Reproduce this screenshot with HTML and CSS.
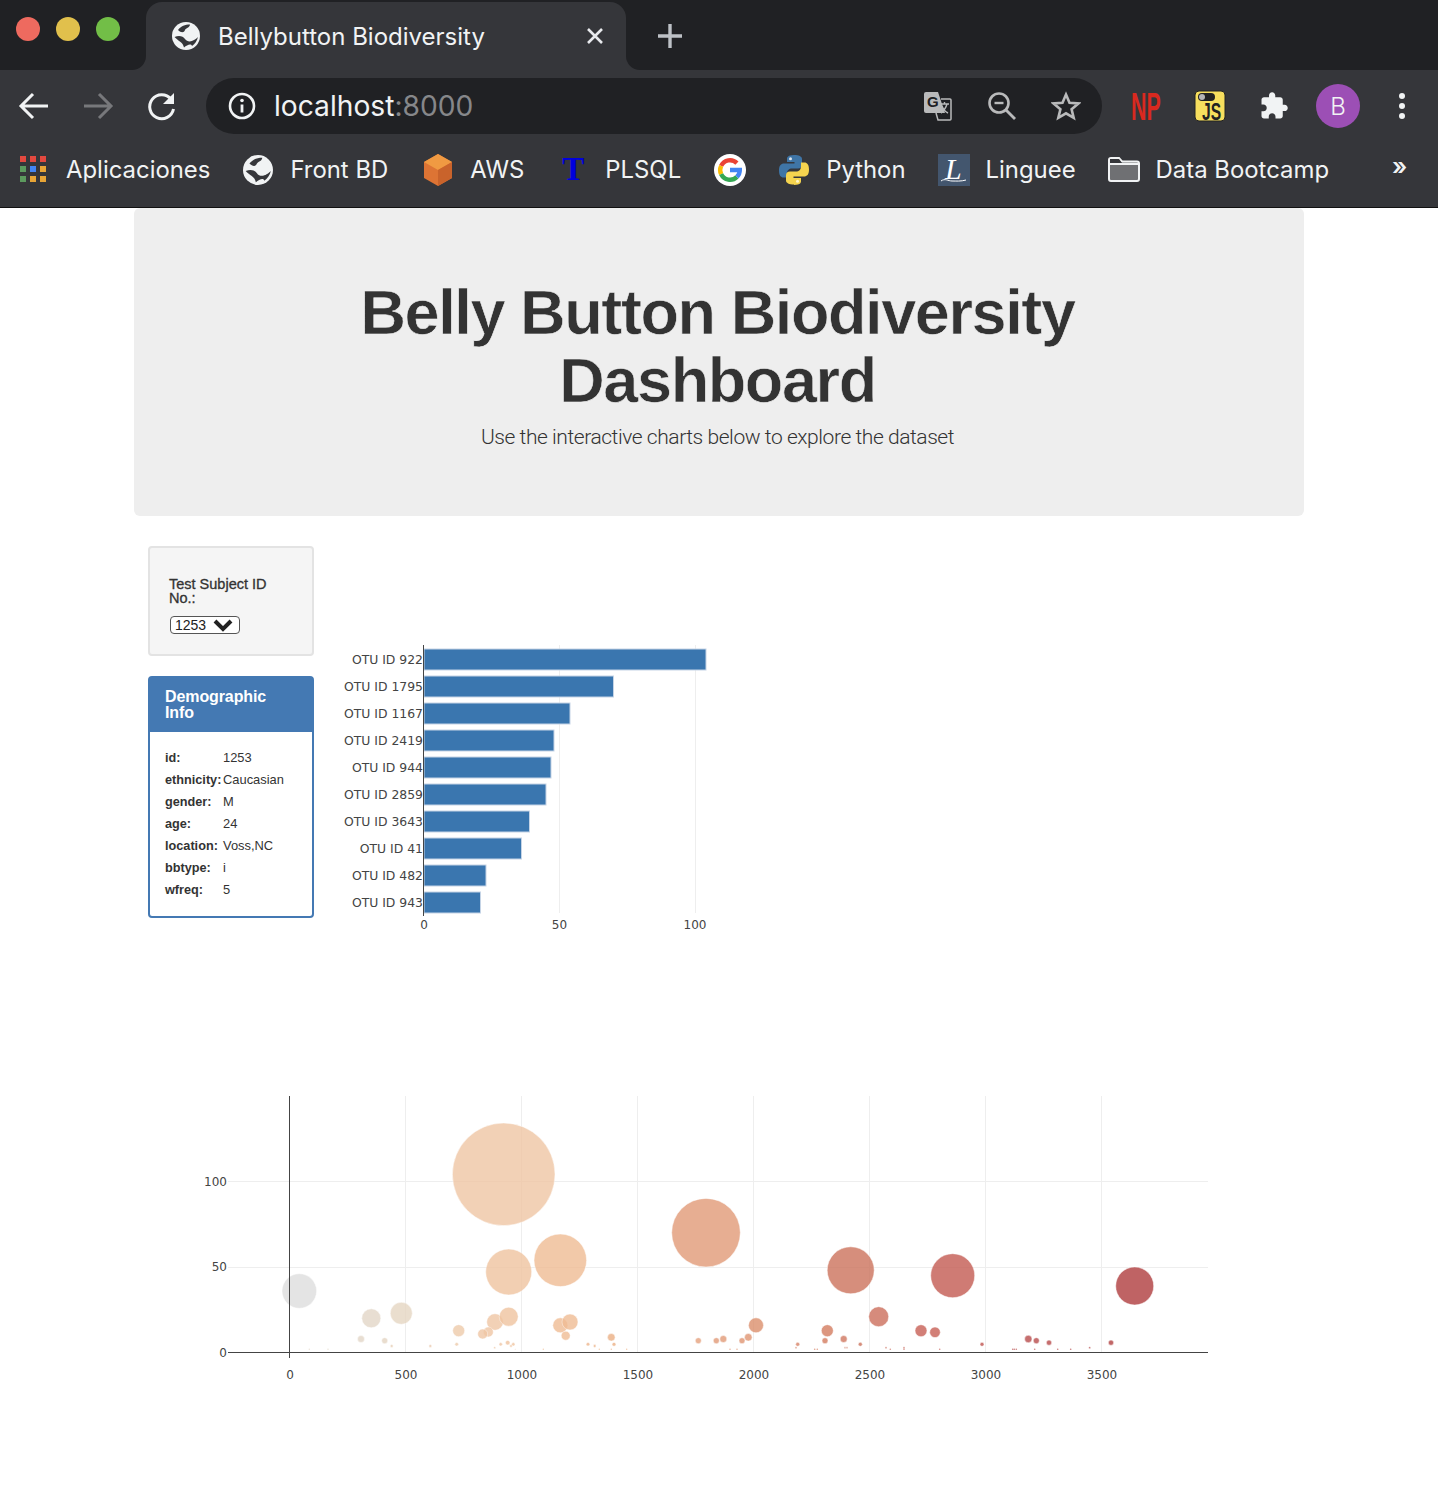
FILE: index.html
```html
<!DOCTYPE html>
<html lang="en">
<head>
    <meta charset="UTF-8">
    <meta name="viewport" content="width=device-width, initial-scale=1.0">
    <title>Bellybutton Biodiversity</title>
    <link rel="stylesheet" href="styles.css">
</head>
<body>
    <svg class="defs" width="0" height="0">
        <symbol id="globe" viewBox="0 0 28 28">
            <circle cx="14" cy="14" r="14" fill="#f1f3f4"/>
            <path d="M6 8C9 4 13 2.500 18 2.500 17.500 6 14 6 13 8 12 11 9 11 6 8z" fill="#35363a"/>
            <path d="M2.500 15C7 13 11 14 13 17c2 3 6 3 9 1 2-1 3-2 4-3-1 4-3 7-6 9-1-3-5-1-8 1.500C11 20 6 19 2.500 15z" fill="#35363a"/>
        </symbol>
    </svg>

    <header class="chrome">
        <div class="tabstrip">
            <div class="lights">
                <span class="light red"></span>
                <span class="light yellow"></span>
                <span class="light green"></span>
            </div>
            <div class="tab-slot">
                <div class="tab">
                    <svg class="tab-icon" width="28" height="28"><use href="#globe"/></svg>
                    <span class="tab-title">Bellybutton Biodiversity</span>
                    <svg class="tab-close" width="18" height="18" viewBox="0 0 18 18"><path d="M2 2l14 14M16 2L2 16" stroke="#e8eaed" stroke-width="2.600"/></svg>
                </div>
            </div>
            <div class="strip-rest">
                <svg width="26" height="26" viewBox="0 0 26 26"><path d="M13 1v24M1 13h24" stroke="#bdc1c6" stroke-width="3.400"/></svg>
            </div>
        </div>

        <div class="toolbar">
            <svg class="nav-icon" width="32" height="32" viewBox="0 0 32 32"><path d="M30 16H4M15 4L3 16l12 12" fill="none" stroke="#f1f3f4" stroke-width="3"/></svg>
            <svg class="nav-icon" width="32" height="32" viewBox="0 0 32 32"><path d="M2 16h26M17 4l12 12-12 12" fill="none" stroke="#77787b" stroke-width="3"/></svg>
            <svg class="nav-icon" width="32" height="32" viewBox="0 0 32 32"><path d="M25 9a12 12 0 1 0 2.500 10" fill="none" stroke="#f1f3f4" stroke-width="3"/><path d="M28 3v11H17z" fill="#f1f3f4"/></svg>
            <div class="omnibox">
                <svg width="28" height="28" viewBox="0 0 28 28"><circle cx="14" cy="14" r="12" fill="none" stroke="#f1f3f4" stroke-width="2.600"/><path d="M14 12.500v8" stroke="#f1f3f4" stroke-width="2.800"/><circle cx="14" cy="8.500" r="1.800" fill="#f1f3f4"/></svg>
                <span class="url">localhost<span class="url-port">:8000</span></span>
                <div class="omni-actions">
                    <svg class="overflow-icon" width="30" height="30" viewBox="0 0 30 30"><path d="M1 3a2 2 0 0 1 2-2h12l7 21H3a2 2 0 0 1-2-2z" fill="#b9babb"/><path d="M18 8h9a1 1 0 0 1 1 1v19a1 1 0 0 1-1 1H15l-2-7" fill="none" stroke="#b9babb" stroke-width="1.500"/><text x="4" y="16" class="tr-g">G</text><path d="M17 13h9M21.500 11v2M24 13c-1 4-4 8-6 9M19 15c1 3 4 6 6 7" fill="none" stroke="#b9babb" stroke-width="1.400"/></svg>
                    <svg width="30" height="30" viewBox="0 0 30 30"><circle cx="12" cy="12" r="9.500" fill="none" stroke="#b9babb" stroke-width="2.600"/><path d="M7.500 12h9" stroke="#b9babb" stroke-width="2.400"/><path d="M19 19l9 9" stroke="#b9babb" stroke-width="2.800"/></svg>
                    <svg width="30" height="30" viewBox="0 0 30 30"><path d="M15 3.500l3.500 8.200 8.900.7-6.800 5.800 2.100 8.700L15 22.300l-7.700 4.600 2.100-8.700-6.800-5.800 8.900-.7z" fill="none" stroke="#b9babb" stroke-width="2.600"/></svg>
                </div>
            </div>
            <div class="ext-icons">
                <svg class="overflow-icon" width="32" height="32" viewBox="0 0 32 32"><text transform="translate(1 30) scale(.55 1)" class="np">NP</text></svg>
                <svg class="overflow-icon" width="32" height="32" viewBox="0 0 32 32"><rect x="1" y="1" width="30" height="30" rx="4" fill="#f7df5e" stroke="#222"/><rect x="4" y="3" width="17" height="8" rx="4" fill="#222"/><circle cx="8" cy="7" r="3" fill="#b5b5b5"/><text transform="translate(8 30) scale(.68 1)" class="js">JS</text></svg>
                <svg width="30" height="30" viewBox="0 0 24 24"><path fill="#f1f3f4" d="M20.500 11H19V7c0-1.100-.9-2-2-2h-4V3.500C13 2.120 11.880 1 10.500 1S8 2.120 8 3.500V5H4c-1.100 0-1.990.9-1.990 2v3.800H3.500c1.490 0 2.700 1.210 2.700 2.700s-1.210 2.700-2.700 2.700H2V20c0 1.100.9 2 2 2h3.800v-1.500c0-1.490 1.210-2.700 2.700-2.700 1.490 0 2.700 1.210 2.700 2.700V22H17c1.100 0 2-.9 2-2v-4h1.500c1.380 0 2.500-1.120 2.500-2.500S21.880 11 20.500 11z"/></svg>
                <span class="avatar">B</span>
                <svg width="8" height="28" viewBox="0 0 8 28"><circle cx="4" cy="4" r="3" fill="#f1f3f4"/><circle cx="4" cy="14" r="3" fill="#f1f3f4"/><circle cx="4" cy="24" r="3" fill="#f1f3f4"/></svg>
            </div>
        </div>

        <nav class="bookmarks">
            <a class="bm bm-apps">
                <svg width="28" height="28" viewBox="0 0 28 28">
                    <rect width="6" height="6" fill="#e2493f"/><rect x="10" width="6" height="6" fill="#e2493f"/><rect x="20" width="6" height="6" fill="#e2493f"/>
                    <rect y="10" width="6" height="6" fill="#5c9a5e"/><rect x="10" y="10" width="6" height="6" fill="#4285f4"/><rect x="20" y="10" width="6" height="6" fill="#e8a536"/>
                    <rect y="20" width="6" height="6" fill="#5c9a5e"/><rect x="10" y="20" width="6" height="6" fill="#e8a536"/><rect x="20" y="20" width="6" height="6" fill="#e8a536"/>
                </svg>
                Aplicaciones
            </a>
            <a class="bm bm-front"><svg width="30" height="30"><use href="#globe"/></svg>Front BD</a>
            <a class="bm bm-aws">
                <svg width="32" height="32" viewBox="0 0 32 32"><path d="M16 0l14 8v16l-14 8-14-8V8z" fill="#dd7434"/><path d="M16 0l14 8-14 8L2 8z" fill="#f09a42"/><path d="M16 16l14-8v16l-14 8z" fill="#c9632b"/></svg>
                AWS
            </a>
            <a class="bm bm-plsql"><span class="t-icon">T</span>PLSQL</a>
            <a class="bm bm-google">
                <svg width="32" height="32" viewBox="0 0 32 32"><circle cx="16" cy="16" r="16" fill="#fff"/><g fill="none" stroke-width="4.400"><path d="M22.930 9.070A9.800 9.800 0 0 0 7.120 11.860" stroke="#ea4335"/><path d="M7.120 11.860A9.800 9.800 0 0 0 7.120 20.140" stroke="#fbbc05"/><path d="M7.120 20.140A9.800 9.800 0 0 0 22.930 22.930" stroke="#34a853"/><path d="M22.930 22.930A9.800 9.800 0 0 0 25.800 16H16" stroke="#4285f4"/></g></svg>
            </a>
            <a class="bm bm-python">
                <svg width="32" height="32" viewBox="0 0 32 32"><path d="M16 1c-7 0-7 3-7 4v3h7.500v1.500H6c-3 0-5 2-5 7s2 7 4.500 7H9v-4c0-3 2-5 5-5h6c2.500 0 4-1.500 4-4V5c0-2.500-3-4-8-4z" fill="#3f75a6"/><circle cx="12.500" cy="4.800" r="1.500" fill="#dfe6ed"/><path d="M16 31c7 0 7-3 7-4v-3h-7.500v-1.500H26c3 0 5-2 5-7s-2-7-4.500-7H23v4c0 3-2 5-5 5h-6c-2.500 0-4 1.500-4 4v5c0 2.500 3 4 8 4z" fill="#f5d44f"/><circle cx="19.500" cy="27.200" r="1.500" fill="#fff6c8"/></svg>
                Python
            </a>
            <a class="bm bm-linguee">
                <svg class="overflow-icon" width="32" height="32" viewBox="0 0 32 32"><rect width="32" height="32" fill="#43566e"/><text x="7" y="25" class="l-glyph">L</text><path d="M3 27c4-3 7 0 11 0 4 0 9 .5 14-1" fill="none" stroke="#fff" stroke-width="1"/></svg>
                Linguee
            </a>
            <a class="bm bm-data">
                <svg width="32" height="25" viewBox="0 0 32 25"><path d="M1 3a2 2 0 0 1 2-2h8l3 3.500h15a2 2 0 0 1 2 2V22a2 2 0 0 1-2 2H3a2 2 0 0 1-2-2z" fill="#6f7073" stroke="#f1f3f4" stroke-width="2"/><path d="M2 2h9l3 4H2z" fill="#35363a"/><path d="M1 7h30" stroke="#f1f3f4" stroke-width="2"/></svg>
                Data Bootcamp
            </a>
            <span class="bm-more">»</span>
        </nav>
    </header>

    <main class="container">
        <section class="jumbotron">
            <h1>Belly Button Biodiversity Dashboard</h1>
            <p>Use the interactive charts below to explore the dataset</p>
        </section>

        <section class="row">
            <aside class="sidebar">
                <div class="well">
                    <h5>Test Subject ID No.:</h5>
                    <div class="fake-select">1253 <svg width="20" height="13" viewBox="0 0 20 13"><path d="M2 2l8 8 8-8" fill="none" stroke="#222" stroke-width="4"/></svg></div>
                </div>
                <div class="panel">
                    <h3 class="panel-title">Demographic Info</h3>
                    <div class="panel-body">
                        <div class="meta-row"><b>id:</b><span>1253</span></div>
                        <div class="meta-row"><b>ethnicity:</b><span>Caucasian</span></div>
                        <div class="meta-row"><b>gender:</b><span>M</span></div>
                        <div class="meta-row"><b>age:</b><span>24</span></div>
                        <div class="meta-row"><b>location:</b><span>Voss,NC</span></div>
                        <div class="meta-row"><b>bbtype:</b><span>i</span></div>
                        <div class="meta-row"><b>wfreq:</b><span>5</span></div>
                    </div>
                </div>
            </aside>

            <svg class="bar-chart" width="400" height="300" viewBox="340 640 400 300">
                <path class="grid" d="M559.500 645v268M695.500 645v268"/>
                <g class="bars">
                    <rect x="424" y="649" width="282" height="21"/>
                    <rect x="424" y="676" width="189.500" height="21"/>
                    <rect x="424" y="703" width="146" height="21"/>
                    <rect x="424" y="730" width="130" height="21"/>
                    <rect x="424" y="757" width="127" height="21"/>
                    <rect x="424" y="784" width="122" height="21"/>
                    <rect x="424" y="811" width="105.500" height="21"/>
                    <rect x="424" y="838" width="97.500" height="21"/>
                    <rect x="424" y="865" width="62" height="21"/>
                    <rect x="424" y="892" width="56.500" height="21"/>
                </g>
                <path class="zero" d="M423.500 645v271"/>
                <g class="ylabels">
                    <text x="423" y="664">OTU ID 922</text>
                    <text x="423" y="691">OTU ID 1795</text>
                    <text x="423" y="718">OTU ID 1167</text>
                    <text x="423" y="745">OTU ID 2419</text>
                    <text x="423" y="772">OTU ID 944</text>
                    <text x="423" y="799">OTU ID 2859</text>
                    <text x="423" y="826">OTU ID 3643</text>
                    <text x="423" y="853">OTU ID 41</text>
                    <text x="423" y="880">OTU ID 482</text>
                    <text x="423" y="907">OTU ID 943</text>
                </g>
                <g class="xlabels">
                    <text x="424" y="929">0</text>
                    <text x="559.500" y="929">50</text>
                    <text x="695" y="929">100</text>
                </g>
            </svg>
        </section>

        <svg class="bubble-chart" width="1170" height="400" viewBox="134 1086 1170 400">
            <path class="grid" d="M405.500 1096v256M521.500 1096v256M637.500 1096v256M753.500 1096v256M869.500 1096v256M985.500 1096v256M1101.500 1096v256M228 1181.500h980M228 1267.500h980"/>
            <g class="bubbles">
                <circle cx="299.300" cy="1291" r="17.300" fill="#dedede"/>
                <circle cx="371.300" cy="1318.300" r="9.500" fill="#e3d7c8"/>
                <circle cx="401.300" cy="1313.300" r="11" fill="#e6d6c2"/>
                <circle cx="361" cy="1339" r="3.500" fill="#e3d7c8"/>
                <circle cx="384.700" cy="1340.700" r="3" fill="#e4d5c3"/>
                <circle cx="391.700" cy="1346" r="1.500" fill="#e8d0b8"/>
                <circle cx="430.300" cy="1346" r="1.500" fill="#eccdb2"/>
                <circle cx="456.700" cy="1344.300" r="1.800" fill="#eecbab"/>
                <circle cx="458.700" cy="1330.700" r="6" fill="#eecbab"/>
                <circle cx="503.700" cy="1174.300" r="51.300" fill="#f0c6a4"/>
                <circle cx="508.700" cy="1272" r="23" fill="#f0c4a0"/>
                <circle cx="495" cy="1322" r="8.300" fill="#f0c6a4"/>
                <circle cx="508.700" cy="1316.700" r="9.500" fill="#f0c4a0"/>
                <circle cx="488.300" cy="1332" r="5" fill="#f0c6a4"/>
                <circle cx="482.700" cy="1334" r="5" fill="#f0c6a4"/>
                <circle cx="500.700" cy="1344.300" r="1.700" fill="#f0c6a4"/>
                <circle cx="507.700" cy="1342.700" r="2.300" fill="#f0c4a0"/>
                <circle cx="513.300" cy="1344.300" r="1.700" fill="#f0c4a0"/>
                <circle cx="511" cy="1346" r="1.300" fill="#f0c4a0"/>
                <circle cx="494.700" cy="1347.700" r="1" fill="#f0c6a4"/>
                <circle cx="515.300" cy="1349.300" r=".5" fill="#f0c4a0"/>
                <circle cx="560.300" cy="1260.300" r="26.300" fill="#f0bc94"/>
                <circle cx="560.300" cy="1325.300" r="7.500" fill="#f0bc94"/>
                <circle cx="570" cy="1322" r="8" fill="#f0bc94"/>
                <circle cx="565.700" cy="1335.700" r="4.500" fill="#f0bc94"/>
                <circle cx="588" cy="1344.300" r="1.800" fill="#eeb68c"/>
                <circle cx="594.700" cy="1346" r="1.400" fill="#eeb68c"/>
                <circle cx="611.300" cy="1337.300" r="3.800" fill="#ecb084"/>
                <circle cx="614" cy="1344.300" r="1.900" fill="#ecb084"/>
                <circle cx="698.300" cy="1340.700" r="3" fill="#e6a27e"/>
                <circle cx="706" cy="1232.700" r="34.300" fill="#e29a77"/>
                <circle cx="716.300" cy="1340.700" r="3" fill="#e29a77"/>
                <circle cx="723.300" cy="1339" r="3.500" fill="#e29a77"/>
                <circle cx="742" cy="1340.700" r="3" fill="#e09572"/>
                <circle cx="748.300" cy="1337.300" r="3.800" fill="#e09572"/>
                <circle cx="756" cy="1325.300" r="7.500" fill="#dc8f6c"/>
                <circle cx="797.700" cy="1344.300" r="2" fill="#d88468"/>
                <circle cx="796" cy="1347.700" r="1" fill="#d88468"/>
                <circle cx="827.300" cy="1330.700" r="6" fill="#d47c60"/>
                <circle cx="825" cy="1340.700" r="3" fill="#d47c60"/>
                <circle cx="843.700" cy="1339" r="3.500" fill="#d07860"/>
                <circle cx="845" cy="1347.700" r=".9" fill="#d07860"/>
                <circle cx="847" cy="1347.700" r=".9" fill="#d07860"/>
                <circle cx="850.700" cy="1270.300" r="23.500" fill="#cc735c"/>
                <circle cx="860.300" cy="1344.300" r="2" fill="#cc735c"/>
                <circle cx="878.700" cy="1316.700" r="10" fill="#cc6f5c"/>
                <circle cx="886" cy="1347.700" r="1" fill="#cc6a5a"/>
                <circle cx="904" cy="1347.700" r="1" fill="#c86458"/>
                <circle cx="921" cy="1330.700" r="6" fill="#c86056"/>
                <circle cx="935" cy="1332.300" r="5.300" fill="#c86056"/>
                <circle cx="952.700" cy="1275.700" r="22" fill="#c45b52"/>
                <circle cx="982" cy="1344.300" r="2" fill="#c05450"/>
                <circle cx="1028.300" cy="1339" r="3.700" fill="#b84c4c"/>
                <circle cx="1036.300" cy="1340.700" r="3" fill="#b84c4c"/>
                <circle cx="1049" cy="1342.700" r="2.600" fill="#b84a4a"/>
                <circle cx="1089.700" cy="1347.700" r="1" fill="#b44444"/>
                <circle cx="1111" cy="1342.700" r="2.600" fill="#b24242"/>
                <circle cx="1134.700" cy="1286" r="19" fill="#b03d3e"/>
            </g>
            <g class="tiny">
                <circle cx="309.300" cy="1349.300" r=".7" fill="#e3d7c8"/>
                <circle cx="328" cy="1349.300" r=".7" fill="#e3d7c8"/>
                <circle cx="543.300" cy="1349.300" r=".7" fill="#f0bc94"/>
                <circle cx="599.300" cy="1349.300" r=".7" fill="#eeb68c"/>
                <circle cx="611.300" cy="1349.300" r=".7" fill="#ecb084"/>
                <circle cx="626.700" cy="1349.300" r=".7" fill="#ecb084"/>
                <circle cx="730" cy="1349.300" r=".8" fill="#e29a77"/>
                <circle cx="737" cy="1349.300" r=".8" fill="#e29a77"/>
                <circle cx="814.700" cy="1349.300" r=".8" fill="#d47c60"/>
                <circle cx="817.300" cy="1349.300" r=".8" fill="#d47c60"/>
                <circle cx="890.300" cy="1349.300" r=".8" fill="#cc6a5a"/>
                <circle cx="904" cy="1349.300" r=".8" fill="#c86458"/>
                <circle cx="939.700" cy="1349.300" r=".8" fill="#c86056"/>
                <circle cx="1012.700" cy="1349.300" r=".8" fill="#b84c4c"/>
                <circle cx="1014.300" cy="1349.300" r=".8" fill="#b84c4c"/>
                <circle cx="1016.300" cy="1349.300" r=".8" fill="#b84c4c"/>
                <circle cx="1034.700" cy="1349.300" r=".8" fill="#b84c4c"/>
                <circle cx="1057.700" cy="1349.300" r=".8" fill="#b84a4a"/>
                <circle cx="1070.700" cy="1349.300" r=".8" fill="#b44444"/>
            </g>
            <path class="zero" d="M228 1352.500h980M289.500 1096v262"/>
            <g class="xlabels">
                <text x="290" y="1379">0</text>
                <text x="406" y="1379">500</text>
                <text x="522" y="1379">1000</text>
                <text x="638" y="1379">1500</text>
                <text x="754" y="1379">2000</text>
                <text x="870" y="1379">2500</text>
                <text x="986" y="1379">3000</text>
                <text x="1102" y="1379">3500</text>
            </g>
            <g class="ylabels">
                <text x="227" y="1186">100</text>
                <text x="227" y="1271">50</text>
                <text x="227" y="1357">0</text>
            </g>
        </svg>
    </main>
</body>
</html>
```

FILE: styles.css
```css
* {
    box-sizing: border-box;
}
html, body {
    margin: 0;
    padding: 0;
}
body {
    height: 1486px;
    overflow: hidden;
    background-color: #fff;
    font-family: "Liberation Sans", Arial, sans-serif;
    color: #333;
}
.defs {
    position: absolute;
}

/* browser window */
.chrome {
    height: 208px;
    background-color: #35363a;
    border-bottom: 1px solid #111;
    font-family: Inter, "Liberation Sans", sans-serif;
    color: #f1f3f4;
}
.tabstrip {
    height: 70px;
    display: flex;
}
.lights {
    width: 146px;
    display: flex;
    gap: 16px;
    padding: 17px 0 0 16px;
    background-color: #202124;
    border-bottom-right-radius: 14px;
}
.light {
    width: 24px;
    height: 24px;
    border-radius: 50%;
}
.red { background-color: #ee6a5f; }
.yellow { background-color: #e1c04c; }
.green { background-color: #72be47; }
.tab-slot {
    width: 480px;
    padding-top: 2px;
    background-color: #202124;
}
.tab {
    height: 68px;
    display: flex;
    align-items: center;
    padding: 0 22px 0 26px;
    background-color: #35363a;
    border-radius: 16px 16px 0 0;
}
.tab-icon {
    margin-right: 18px;
}
.tab-title {
    flex: 1;
    font-size: 24px;
    white-space: nowrap;
}
.strip-rest {
    flex: 1;
    display: flex;
    align-items: center;
    padding: 2px 0 0 31px;
    background-color: #202124;
    border-bottom-left-radius: 14px;
}
.toolbar {
    height: 68px;
    display: flex;
    align-items: center;
    padding: 4px 0 0 18px;
}
.nav-icon {
    margin-right: 32px;
}
.omnibox {
    width: 896px;
    height: 56px;
    margin-left: -4px;
    display: flex;
    align-items: center;
    padding: 0 21px 0 22px;
    background-color: #202124;
    border-radius: 28px;
}
.url {
    margin-left: 18px;
    font-size: 28.200px;
    white-space: nowrap;
}
.url-port {
    color: #86878a;
}
.omni-actions {
    margin-left: auto;
    display: flex;
    gap: 34px;
}
.overflow-icon {
    overflow: visible;
}
.tr-g {
    font: bold 15px "Liberation Sans", sans-serif;
    fill: #202124;
}
.ext-icons {
    display: grid;
    grid-template-columns: repeat(5, 64px);
    align-items: center;
    justify-items: center;
    margin-left: 12px;
}
.np {
    font: bold 39px "Liberation Sans", sans-serif;
    fill: #d9291f;
}
.js {
    font: bold 23px "Liberation Sans", sans-serif;
    fill: #222;
}
.avatar {
    width: 44px;
    height: 44px;
    display: flex;
    align-items: center;
    justify-content: center;
    border-radius: 50%;
    background-color: #9c4fb5;
    font-size: 24px;
    font-weight: 300;
}
.bookmarks {
    height: 69px;
    position: relative;
    display: flex;
    align-items: center;
    padding: 0 0 6px 20px;
    font-size: 23.900px;
}
.bm {
    display: flex;
    align-items: center;
    gap: 16px;
    margin-right: 33px;
    white-space: nowrap;
}
.bm-apps {
    gap: 18px;
}
.bm-front {
    gap: 17px;
    margin-right: 34px;
}
.bm-google {
    margin-right: 32px;
}
.bm-python {
    margin-right: 32px;
}
.bm-linguee {
    margin-right: 32px;
}
.t-icon {
    width: 32px;
    text-align: center;
    font: bold 33px "Liberation Serif", serif;
    color: #0000dd;
}
.l-glyph {
    font: italic 30px "Liberation Serif", serif;
    fill: #fff;
}
.bm-more {
    position: absolute;
    left: 1392px;
    top: 14px;
    font-size: 24px;
    font-weight: 600;
}

/* page */
.container {
    width: 1170px;
    margin: 0 auto;
}
.jumbotron {
    height: 308px;
    padding: 70px 3px 0 0;
    text-align: center;
    background-color: #eee;
    border-radius: 6px;
}
.jumbotron h1 {
    margin: 0 auto;
    width: 800px;
    font-size: 63px;
    line-height: 68px;
    font-weight: bold;
    letter-spacing: -1.400px;
    -webkit-text-stroke: .6px #eee;
}
.jumbotron p {
    margin: 11px 0 0;
    font-family: Roboto, "Liberation Sans", sans-serif;
    font-size: 21px;
    font-weight: 300;
    letter-spacing: -.44px;
}
.row {
    display: flex;
    height: 570px;
    padding: 30px 0 0 14px;
}
.sidebar {
    width: 166px;
    flex: none;
}
.well {
    height: 110px;
    padding: 29px 19px 0;
    background-color: #f5f5f5;
    border: 2px solid #e3e3e3;
    border-radius: 4px;
}
.well h5 {
    margin: 0 0 11px;
    font-size: 14.500px;
    line-height: 14px;
    font-weight: normal;
    -webkit-text-stroke: .3px #333;
}
.fake-select {
    width: 70px;
    height: 18px;
    margin-left: 1px;
    display: flex;
    align-items: center;
    gap: 7px;
    padding-left: 4px;
    border: 1px solid #555;
    border-radius: 4px;
    background-color: #fff;
    font-size: 14px;
    color: #222;
}
.panel {
    height: 242px;
    margin-top: 20px;
    border: 2px solid #4479b3;
    border-radius: 4px;
}
.panel-title {
    height: 54px;
    margin: 0;
    padding: 11px 15px 0;
    background-color: #4479b3;
    font-size: 16px;
    line-height: 16px;
    letter-spacing: -.1px;
    color: #fff;
}
.panel-body {
    padding: 15px 15px 0;
}
.meta-row {
    display: grid;
    grid-template-columns: 58px 1fr;
    height: 22px;
    font-size: 12.900px;
    line-height: 22px;
    white-space: nowrap;
}
.meta-row b {
    font-size: 12.700px;
}

/* charts */
.bar-chart {
    margin: 94px 0 0 26px;
    flex: none;
}
.bar-chart .ylabels text {
    font-size: 12.400px;
}
.bubble-chart {
    display: block;
}
.grid {
    stroke: #eee;
    fill: none;
}
.zero {
    stroke: #444;
    fill: none;
}
.bars rect {
    fill: #3a76af;
    stroke: #c5d4e6;
    stroke-width: 1;
}
.bubbles circle {
    opacity: .8;
    stroke: #fff;
    stroke-width: .5;
}
.tiny circle {
    opacity: .7;
}
.ylabels text,
.xlabels text {
    font-family: "DejaVu Sans", Verdana, sans-serif;
    font-size: 12px;
    fill: #444;
}
.ylabels text {
    text-anchor: end;
}
.xlabels text {
    text-anchor: middle;
}
```
